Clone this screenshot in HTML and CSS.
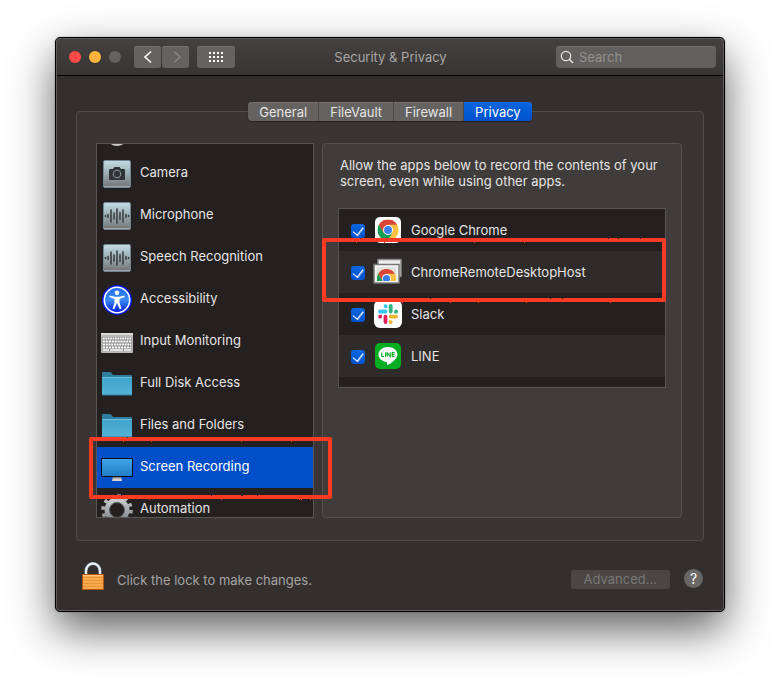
FILE: index.html
```html
<!DOCTYPE html>
<html lang="en">
<head>
<meta charset="utf-8">
<meta name="viewport" content="width=device-width, initial-scale=1">
<title>Security &amp; Privacy</title>
<link rel="stylesheet" href="styles.css">
</head>
<body>
<svg class="defs" aria-hidden="true">
  <defs>
    <linearGradient id="tile" x1="0" y1="0" x2="0" y2="1"><stop offset="0" stop-color="#c3dde5"/><stop offset=".5" stop-color="#9aabb1"/><stop offset="1" stop-color="#727272"/></linearGradient>
    <linearGradient id="folder" x1="0" y1="0" x2="0" y2="1"><stop offset="0" stop-color="#3fa3cb"/><stop offset="1" stop-color="#55b3d6"/></linearGradient>
    <linearGradient id="screen" x1="0" y1="0" x2="0" y2="1"><stop offset="0" stop-color="#41a5ea"/><stop offset="1" stop-color="#1f7cc4"/></linearGradient>
    <linearGradient id="access" x1="0" y1="0" x2="0" y2="1"><stop offset="0" stop-color="#1d6df0"/><stop offset=".5" stop-color="#3d8bf5"/><stop offset="1" stop-color="#0018e8"/></linearGradient>
    <linearGradient id="gear" x1="0" y1="0" x2="0" y2="1"><stop offset="0" stop-color="#c9cccf"/><stop offset="1" stop-color="#84888c"/></linearGradient>
    <filter id="rough" x="-5%" y="-10%" width="110%" height="120%"><feTurbulence type="fractalNoise" baseFrequency="0.5" numOctaves="2" seed="4"/><feDisplacementMap in="SourceGraphic" scale="2" xChannelSelector="R" yChannelSelector="G"/><feGaussianBlur stdDeviation=".4"/></filter>
    <symbol id="i-wave" viewBox="0 0 32 32">
      <rect x="2.5" y="2.5" width="27" height="27" rx="1.5" fill="url(#tile)" stroke="#6f8592"/>
      <path d="M3 28.500H29" stroke="#a4a4a4"/>
      <g stroke="#34393b" stroke-width="1.500" stroke-linecap="round"><path d="M4.500 15.500v1M7 14.500v3M10 10v12M13 13v6M16 9v14M19 12.500v7M22 10v12M25 14.500v3M27.500 15.500v1"/></g>
    </symbol>
    <symbol id="i-folder" viewBox="0 0 32 32">
      <path d="M1 6V5q0-1 1-1h7q1 0 2 1.500L12 7h18q1 0 1 1v4H1z" fill="#2e7d9f"/>
      <path d="M1 9.500Q1 9 2 9h28q1 0 1 .5V27H1z" fill="url(#folder)"/>
      <path d="M1 9.500h30" stroke="#79c6e2" stroke-width=".8"/><path d="M1 27h30" stroke="#2d7fa1"/>
    </symbol>
    <symbol id="i-chrome" viewBox="0 0 24 24">
      <circle cx="12" cy="12" r="12" fill="#fcc934"/>
      <path d="M12 12 22.400 6A12 12 0 0 0 1.600 6L6.800 15z" fill="#db4437"/>
      <path d="M12 12 6.800 15 1.600 6A12 12 0 0 0 12 24l5.200-9z" fill="#0f9d58"/>
      <path d="M12 12 17.200 15 12 24A12 12 0 0 0 22.400 6H12z" fill="#fcc044"/>
      <circle cx="12" cy="12" r="5.600" fill="#fff"/><circle cx="12" cy="12" r="4.500" fill="#3a7ded"/>
    </symbol>
  </defs>
</svg>

<div class="window">
  <header class="titlebar">
    <div class="lights"><span class="light close"></span><span class="light minimize"></span><span class="light"></span></div>
    <div class="nav">
      <button class="tool" type="button" aria-label="Back"><svg width="26" height="22" viewBox="0 0 26 22"><path d="M16 5.500l-6 5.500 6 5.500" fill="none" stroke="#fff" stroke-width="1.600"/></svg></button>
      <button class="tool" type="button" aria-label="Forward" disabled><svg width="26" height="22" viewBox="0 0 26 22"><path d="M11 5.500l6 5.500-6 5.500" fill="none" stroke="#888584" stroke-width="1.500"/></svg></button>
    </div>
    <button class="tool grid-button" type="button" aria-label="Show all"><svg width="16" height="12" viewBox="0 0 16 12"><path d="M1 2h14M1 6h14M1 10h14" stroke="#fff" stroke-width="2" stroke-dasharray="2 2"/></svg></button>
    <h1>Security &amp; Privacy</h1>
    <label class="search">
      <svg width="14" height="14" viewBox="0 0 14 14" aria-hidden="true"><circle cx="6" cy="6" r="4.700" fill="none" stroke="#e2e1e0" stroke-width="1.200"/><path d="M9.400 9.400l3.600 3.600" stroke="#e2e1e0" stroke-width="1.500"/></svg>
      <input type="text" placeholder="Search" aria-label="Search">
    </label>
  </header>

  <main>
    <nav class="tabs" aria-label="Sections">
      <button type="button">General</button><button type="button">FileVault</button><button type="button">Firewall</button><button type="button" class="active" aria-current="page">Privacy</button>
    </nav>
    <section class="panel">
      <div class="sidebar">
        <ul class="services">
          <li class="peek"><svg class="icon" viewBox="0 0 32 32"><circle cx="16" cy="19" r="11" fill="#c8c8c8"/><circle cx="16" cy="17" r="9" fill="#777"/></svg></li>
          <li><button type="button"><svg class="icon" viewBox="0 0 32 32"><rect x="2.500" y="2.500" width="27" height="27" rx="1.500" fill="url(#tile)" stroke="#6f8592"/><path d="M3 28.500H29" stroke="#a4a4a4"/><path d="M9 11h3l1.500-2h5l1.500 2h3q1 0 1 1v9q0 1-1 1H9q-1 0-1-1v-9q0-1 1-1z" fill="#303335"/><circle cx="16" cy="16" r="3.700" fill="#303538" stroke="#879196" stroke-width="1.100"/></svg><span>Camera</span></button></li>
          <li><button type="button"><svg class="icon"><use href="#i-wave"/></svg><span>Microphone</span></button></li>
          <li><button type="button"><svg class="icon"><use href="#i-wave"/></svg><span>Speech Recognition</span></button></li>
          <li><button type="button"><svg class="icon" viewBox="0 0 32 32"><circle cx="16" cy="16" r="15" fill="#0718e6"/><circle cx="16" cy="16" r="12.700" fill="url(#access)" stroke="#fff" stroke-width="1.600"/><circle cx="16" cy="8.800" r="2.300" fill="#fff"/><path d="M8.500 11.500l5.500 1.300h4l5.500-1.300.2 1.500-5.200 1.900v3.500l2 6.400-1.700.5-2.800-6.600-2.800 6.600-1.700-.5 2-6.400v-3.500L8.300 13z" fill="#fff"/></svg><span>Accessibility</span></button></li>
          <li><button type="button"><svg class="icon" viewBox="0 0 32 32"><rect y="7" width="32" height="20" rx="1" fill="#b9b9b9"/><path d="M0 8h32" stroke="#d9d9d9" stroke-width="2"/><rect x="1.500" y="11" width="29" height="14" fill="#858585"/><g stroke="#fff" stroke-width="2"><path d="M2 12.500h28" stroke-dasharray="1.700 .7"/><path d="M2 15.500h28" stroke-dasharray="2.200 .7"/><path d="M2 18.500h28" stroke-dasharray="2 .7"/><path d="M2 21.500h28" stroke-dasharray="2.300 .7"/><path d="M2 24h6M9 24h13M23 24h7" stroke-width="1.500"/></g></svg><span>Input Monitoring</span></button></li>
          <li><button type="button"><svg class="icon"><use href="#i-folder"/></svg><span>Full Disk Access</span></button></li>
          <li><button type="button"><svg class="icon"><use href="#i-folder"/></svg><span>Files and Folders</span></button></li>
          <li><button type="button" class="selected"><svg class="icon" viewBox="0 0 32 32"><path d="M12 25h8l1 4H11z" fill="#d8d5ce"/><path d="M12 25h8l.3 1.500h-8.600z" fill="#8e8b86"/><rect x=".5" y="6.500" width="31" height="18" rx=".5" fill="url(#screen)" stroke="#0a0d12"/></svg><span>Screen Recording</span></button></li>
          <li><button type="button"><svg class="icon" viewBox="0 0 32 32"><circle cx="16" cy="16" r="14" fill="none" stroke="url(#gear)" stroke-width="3.500" stroke-dasharray="3.400 3.930"/><circle cx="16" cy="16" r="10" fill="none" stroke="url(#gear)" stroke-width="5"/><circle cx="16" cy="16" r="7.500" fill="none" stroke="#5b5e61"/></svg><span>Automation</span></button></li>
        </ul>
        <svg class="mark mark-service" aria-hidden="true"><rect/></svg>
      </div>
      <div class="detail">
        <p>Allow the apps below to record the contents of your screen, even while using other apps.</p>
        <div class="app-area">
          <ul class="apps">
            <li><label><input type="checkbox" checked><svg class="app-icon" viewBox="0 0 28 28"><rect x="1" y="1" width="26" height="26" rx="5" fill="#fff"/><use href="#i-chrome" x="3.500" y="3.500" width="21" height="21"/></svg>Google Chrome</label></li>
            <li><label><input type="checkbox" checked><svg class="app-icon" viewBox="0 0 28 28"><rect x="4" y="1.500" width="23" height="17" fill="#eee" stroke="#888" stroke-width="1.500"/><rect x="0" y="6.500" width="25" height="18.500" fill="#f5f5f5" stroke="#777" stroke-width="1.500"/><rect x="2.500" y="9" width="20" height="14" fill="#e2e2e2"/><svg x="3" y="11" width="19" height="12" viewBox="0 0 19 12"><use href="#i-chrome" x="0" y="0" width="19" height="19"/></svg></svg>ChromeRemoteDesktopHost</label></li>
            <li><label><input type="checkbox" checked><svg class="app-icon" viewBox="0 0 28 28"><rect width="28" height="28" rx="6" fill="#fff"/><g stroke-width="3.800" stroke-linecap="round"><path d="M6 11.500h5.500" stroke="#36c5f0"/><path d="M16.700 6v5.500" stroke="#2eb67d"/><path d="M16.700 16.700H22" stroke="#ecb22e"/><path d="M11.500 16.700V22" stroke="#e01e5a"/></g><path d="M13.400 8h-1.900a1.900 1.900 0 1 1 1.900-1.900z" fill="#36c5f0"/><path d="M20.200 13.400v-1.900a1.900 1.900 0 1 1 1.900 1.900z" fill="#2eb67d"/><path d="M14.800 20.200h1.900a1.900 1.900 0 1 1-1.900 1.900z" fill="#ecb22e"/><path d="M8 14.800v1.900a1.900 1.900 0 1 1-1.900-1.900z" fill="#e01e5a"/></svg>Slack</label></li>
            <li><label><input type="checkbox" checked><svg class="app-icon" viewBox="0 0 28 28"><rect x="1" y="1" width="26" height="26" rx="5" fill="#06ad22"/><path d="M14 5C8.600 5 4.500 8.400 4.500 12.600c0 3.800 3.400 6.900 8 7.500 1 .2.600 1.300.5 2.500 0 .6.400.6 1 .3 2.200-1 9.500-5.500 9.500-10.300C23.500 8.400 19.400 5 14 5z" fill="#fff"/><path d="M7.800 10.500v4h2.300M11.600 10.200v4.600M13.200 14.800v-4l3 3.700v-4.300M20.600 10.600h-2.400v3.800h2.400M18.200 12.500h2.300" fill="none" stroke="#06ad22" stroke-width="1.100"/></svg>LINE</label></li>
          </ul>
          <svg class="mark mark-app" aria-hidden="true"><rect/></svg>
        </div>
      </div>
    </section>
    <footer>
      <button class="lock" type="button" aria-label="Unlock"><svg width="22" height="28" viewBox="0 0 22 28"><path d="M4 13V9a7 7.500 0 0 1 14 0v4" fill="none" stroke="#8fa3b0" stroke-width="3"/><path d="M4 13V9a7 7.500 0 0 1 14 0v4" fill="none" stroke="#f3f7fa" stroke-width="1.800"/><rect x=".5" y="12.500" width="21" height="15" fill="#f9a94b" stroke="#b3550f"/><path d="M1 15.500h20M1 18.500h20M1 21.500h20M1 24.500h20" stroke="#e8963e"/><path d="M1 13.500h20" stroke="#ffc878"/></svg></button>
      <span class="lock-text">Click the lock to make changes.</span>
      <button class="advanced" type="button" disabled>Advanced...</button>
      <button class="help" type="button" aria-label="Help">?</button>
    </footer>
  </main>
</div>
</body>
</html>
```
FILE: styles.css
```css
* { box-sizing: border-box; }

body {
  margin: 0;
  padding: 37px 55px 73px;
  background: #fff;
  color: #e6e5e4;
  font: 13px/16px Inter, "Liberation Sans", sans-serif;
}

button, input { font: inherit; color: inherit; }
button { border: 0; padding: 0; background: none; }
ul { list-style: none; margin: 0; padding: 0; }
svg { display: block; flex: none; }
.defs { position: absolute; width: 0; height: 0; }

.window {
  position: relative;
  border: 1px solid #000;
  border-radius: 5px;
  background: #332f2e;
  box-shadow: 0 0 2px rgba(0, 0, 0, .3), 0 18px 44px rgba(0, 0, 0, .62);
}

.window::after {
  content: "";
  position: absolute;
  inset: 0;
  border: 1px solid #5d5b5a;
  border-radius: 4px;
  pointer-events: none;
}

.titlebar {
  display: grid;
  grid-template-columns: auto auto auto 1fr 160px;
  align-items: center;
  height: 38px;
  padding: 0 8px 0 13px;
  border-bottom: 1px solid #000;
  border-radius: 4px 4px 0 0;
  background: linear-gradient(#444140, #373533);
}

.lights { display: flex; gap: 8px; }
.light { width: 12px; height: 12px; border-radius: 50%; background: #656362; }
.close { background: #ff4b47; }
.minimize { background: #fdb43a; }

.nav { display: flex; gap: 1px; margin-left: 13px; }
.tool {
  display: grid;
  place-items: center;
  width: 27px;
  height: 22px;
  border-radius: 3px;
  background: #656362;
  box-shadow: inset 0 1px #73706f;
}
.grid-button { width: 38px; margin-left: 8px; }

h1 {
  margin: 0;
  padding-right: 10px;
  color: #a9a7a6;
  font-size: 13px;
  font-weight: 400;
  text-align: center;
}

.search {
  display: flex;
  align-items: center;
  gap: 5px;
  height: 22px;
  padding: 0 4px;
  border-radius: 4px;
  background: #62605e;
  box-shadow: inset 0 1px #706e6c;
}
.search input { min-width: 0; flex: 1; padding: 0; border: 0; outline: 0; background: none; }
.search input::placeholder { color: #92908f; opacity: 1; }

main { padding: 26px 20px 21px; }

.tabs {
  position: relative;
  display: flex;
  width: fit-content;
  margin: 0 auto;
  border-radius: 4px;
  background: #656362;
  box-shadow: 0 1px 1px rgba(0, 0, 0, .4), inset 0 1px #73706f;
  overflow: hidden;
}
.tabs button { height: 19px; padding: 0 11px; border-right: 1px solid #4b4847; }
.tabs .active { border: 0; background: linear-gradient(#0965de, #0052cc); color: #fff; }

.panel {
  display: grid;
  grid-template-columns: 218px 1fr;
  gap: 8px;
  margin-top: -10px;
  padding: 31px 21px 22px 19px;
  border: 1px solid #504d4c;
  border-radius: 4px;
  background: #3a3534;
}

.sidebar { position: relative; }
.services {
  height: 375px;
  overflow: hidden;
  border: 1px solid #585655;
  background: #242020;
}
.services li { height: 42px; }
.services .peek { display: flex; align-items: flex-start; height: 9px; padding: 0 4px; overflow: hidden; }
.services button {
  display: flex;
  align-items: center;
  gap: 7px;
  width: 100%;
  height: 41px;
  padding: 0 4px;
  text-align: left;
}
.services span { padding-bottom: 3px; }
.services .selected { background: #004fc8; color: #fff; }
.icon { width: 32px; height: 32px; }
.services .peek .icon { margin-top: -28px; }

.detail {
  padding: 13px 15px;
  border: 1px solid #545150;
  border-radius: 4px;
  background: #403c3b;
}
.detail p { margin: 0 2px 19px; }

.app-area { position: relative; }
.apps { padding-bottom: 10px; border: 1px solid #585655; background: #242020; }
.apps li:nth-child(even) { background: #2f2b2a; }
.apps label { display: flex; align-items: center; height: 42px; padding-left: 12px; }
.app-icon { width: 28px; height: 28px; margin: 0 9px; overflow: visible; }

input[type="checkbox"] {
  appearance: none;
  display: grid;
  place-items: center;
  width: 14px;
  height: 14px;
  margin: 2px 0 0;
  border-radius: 3px;
  background: linear-gradient(#0c66df, #0052cc);
}
input[type="checkbox"]:checked::before {
  content: "";
  width: 5px;
  height: 9px;
  margin-top: -3px;
  border: solid #fff;
  border-width: 0 1px 1px 0;
  box-shadow: 1px 0 rgba(255, 255, 255, .4);
  transform: rotate(38deg);
}

.mark { position: absolute; overflow: visible; pointer-events: none; }
.mark rect {
  x: 2px;
  y: 2px;
  width: calc(100% - 4px);
  height: calc(100% - 4px);
  fill: none;
  stroke: #f83a22;
  stroke-width: 4px;
  stroke-linejoin: round;
  filter: url(#rough);
}
.mark-service { left: -7px; top: 294px; width: calc(100% + 25px); height: 62px; z-index: 1; }
.mark-app { left: -16px; top: 30px; width: calc(100% + 16px); height: 64px; }

footer { display: flex; align-items: center; padding: 21px 1px 0 6px; }
.lock-text { margin: 8px auto 0 13px; color: #a5a3a2; }
.advanced {
  height: 19px;
  margin-top: 6px;
  padding: 0 13px;
  border-radius: 3px;
  background: #494645;
  color: #797775;
}
.help {
  width: 19px;
  height: 19px;
  margin: 5px 0 0 14px;
  border-radius: 50%;
  background: #6a6867;
  color: #fff;
  font-size: 14px;
}
```
